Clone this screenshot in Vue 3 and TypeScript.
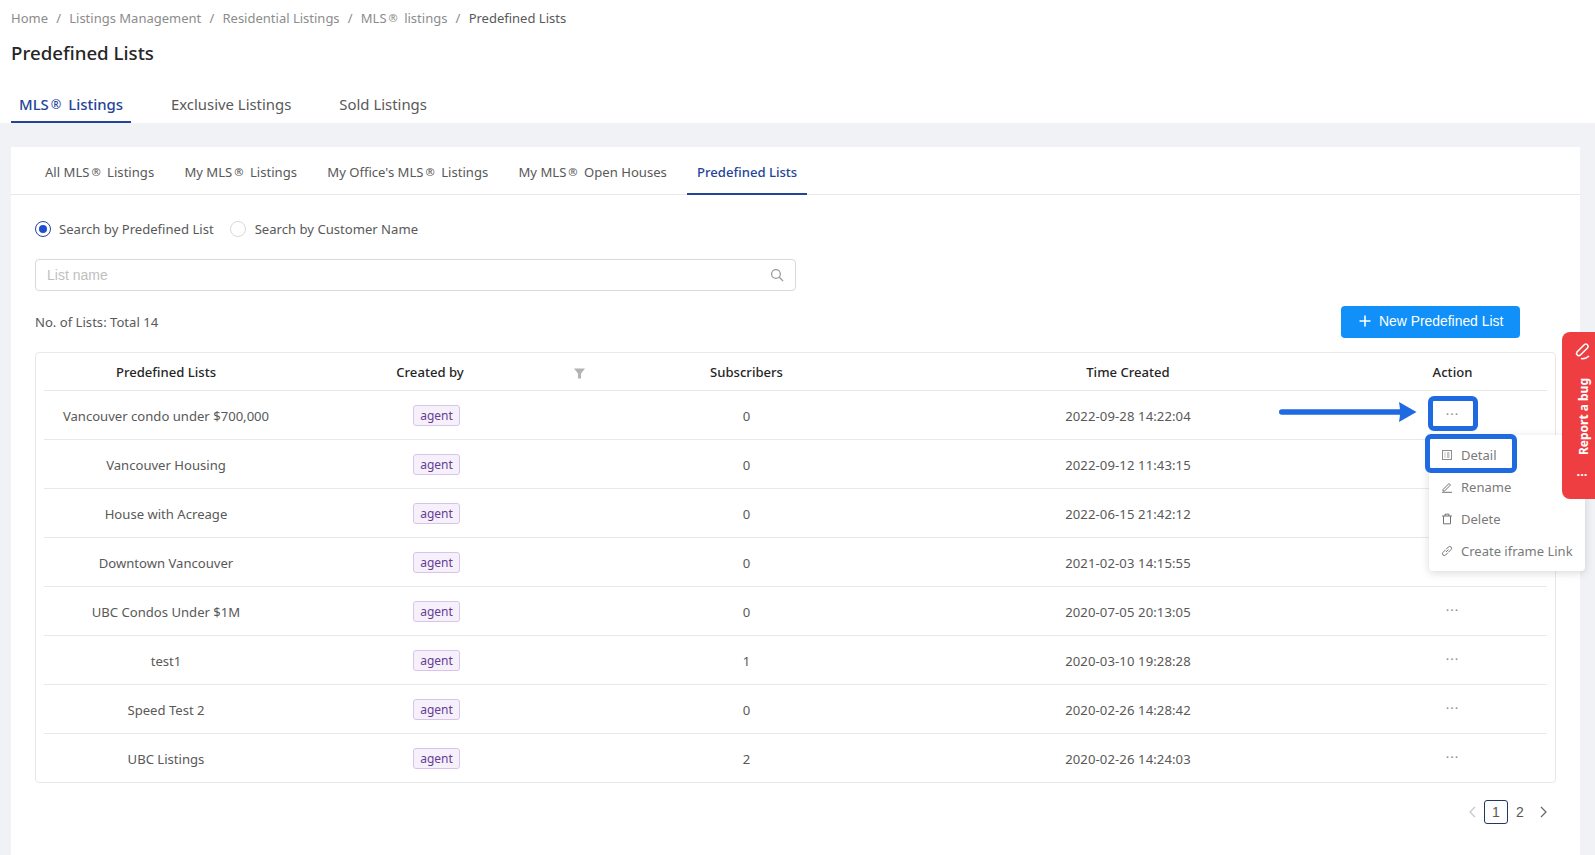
<script setup lang="ts">
interface Row { name: string; subs: number; time: string }
interface RegLabel { pre: string; post: string }
const crumbs: string[] = ['Home', 'Listings Management', 'Residential Listings']
const subTabs: RegLabel[] = [
  { pre: 'All MLS', post: ' Listings' },
  { pre: 'My MLS', post: ' Listings' },
  { pre: "My Office's MLS", post: ' Listings' },
  { pre: 'My MLS', post: ' Open Houses' }
]
const rows: Row[] = [
  { name: 'Vancouver condo under $700,000', subs: 0, time: '2022-09-28 14:22:04' },
  { name: 'Vancouver Housing', subs: 0, time: '2022-09-12 11:43:15' },
  { name: 'House with Acreage', subs: 0, time: '2022-06-15 21:42:12' },
  { name: 'Downtown Vancouver', subs: 0, time: '2021-02-03 14:15:55' },
  { name: 'UBC Condos Under $1M', subs: 0, time: '2020-07-05 20:13:05' },
  { name: 'test1', subs: 1, time: '2020-03-10 19:28:28' },
  { name: 'Speed Test 2', subs: 0, time: '2020-02-26 14:28:42' },
  { name: 'UBC Listings', subs: 2, time: '2020-02-26 14:24:03' }
]
</script>

<template>
  <div class="page">
    <header class="top">
      <nav class="crumbs">
        <template v-for="c in crumbs" :key="c">
          <span>{{ c }}</span><span class="sep">/</span>
        </template>
        <span>MLS<span class="reg">®</span> listings</span><span class="sep">/</span>
        <span class="current">Predefined Lists</span>
      </nav>
      <h1 class="title">Predefined Lists</h1>
      <div class="main-tabs">
        <span class="main-tab active">MLS<span class="reg">®</span> Listings</span>
        <span class="main-tab">Exclusive Listings</span>
        <span class="main-tab">Sold Listings</span>
      </div>
    </header>

    <section class="card">
      <div class="sub-tabs">
        <span v-for="t in subTabs" :key="t.pre + t.post" class="sub-tab">{{ t.pre }}<span class="reg">®</span>{{ t.post }}</span>
        <span class="sub-tab active">Predefined Lists</span>
      </div>

      <div class="body">
        <div class="radios">
          <span class="radio on"></span><span class="radio-label">Search by Predefined List</span>
          <span class="radio"></span><span class="radio-label">Search by Customer Name</span>
        </div>

        <div class="search">
          <span class="placeholder">List name</span>
          <svg class="search-icon" viewBox="0 0 16 16" width="14" height="14" fill="none" stroke="#9a9a9a" stroke-width="1.5">
            <circle cx="6.8" cy="6.8" r="5" />
            <path d="M10.6 10.6 15 15" />
          </svg>
        </div>

        <div class="toolbar">
          <span class="count">No. of Lists: Total 14</span>
          <button class="new-btn" type="button">
            <svg viewBox="0 0 12 12" width="12" height="12" stroke="#fff" stroke-width="1.6">
              <path d="M6 0.5v11M0.5 6h11" />
            </svg>
            New Predefined List
          </button>
        </div>

        <div class="table">
          <div class="row head">
            <div class="cell">Predefined Lists</div>
            <div class="cell created">
              <span class="created-text">Created by</span>
              <svg class="filter" viewBox="0 0 10 10" width="11" height="11" fill="#b3b3b3">
                <path d="M0 0.5h10L6.4 5v4.500H3.600V5z" />
              </svg>
            </div>
            <div class="cell">Subscribers</div>
            <div class="cell">Time Created</div>
            <div class="cell action">Action</div>
          </div>
          <div v-for="r in rows" :key="r.name" class="row">
            <div class="cell text">{{ r.name }}</div>
            <div class="cell"><span class="tag">agent</span></div>
            <div class="cell text">{{ r.subs }}</div>
            <div class="cell text time">{{ r.time }}</div>
            <div class="cell action"><span class="dots">···</span></div>
          </div>
        </div>

        <div class="pager">
          <svg class="prev" viewBox="0 0 8 12" width="8" height="12" fill="none" stroke="#c4c4c4" stroke-width="1.2"><path d="M7 1 2 6l5 5" /></svg>
          <span class="page-num current-page">1</span>
          <span class="page-num">2</span>
          <svg class="next" viewBox="0 0 8 12" width="8" height="12" fill="none" stroke="#666" stroke-width="1.2"><path d="m1 1 5 5-5 5" /></svg>
        </div>
      </div>
    </section>

    <div class="menu">
      <div class="menu-item">
        <svg viewBox="0 0 12 12" width="12" height="12" fill="none" stroke="#8c8c8c"><rect x="1.5" y="1.5" width="9" height="9" /><path d="M6 4h2.500M6 6h2.500M6 8h2.500M3.500 4h1M3.500 6h1M3.500 8h1" /></svg>
        Detail
      </div>
      <div class="menu-item">
        <svg viewBox="0 0 12 12" width="12" height="12" fill="none" stroke="#737373"><path d="M2 8.500 8 2.500l1.500 1.500-6 6H2zM1 11.300h10" /></svg>
        Rename
      </div>
      <div class="menu-item">
        <svg viewBox="0 0 12 12" width="12" height="12" fill="none" stroke="#737373"><path d="M1 3h10M4 3V1.200h4V3M2.500 3v7.800h7V3" /></svg>
        Delete
      </div>
      <div class="menu-item">
        <svg viewBox="0 0 12 12" width="12" height="12" fill="none" stroke="#737373"><path d="M5 7 7.500 4.500M4.400 5 2 7.400a1.800 1.800 0 0 0 2.600 2.600L7 7.600M5 4.400 7.400 2A1.800 1.800 0 0 1 10 4.600L7.600 7" /></svg>
        Create iframe Link
      </div>
    </div>

    <div class="mark mark-dots"></div>
    <div class="mark mark-detail"></div>
    <svg class="arrow" viewBox="0 0 140 22" width="140" height="22" fill="#1f6ae0">
      <rect x="0" y="8.300" width="126" height="5.500" rx="2.700" />
      <path d="M120 1 137.500 11 120 21q2-10 0-20z" />
    </svg>

    <aside class="bug">
      <svg class="bug-icon" viewBox="0 0 20 20" width="20" height="20" fill="none" stroke="#fff" stroke-width="1.5">
        <path d="M12.500 3.500 5 11a2.300 2.300 0 0 0 3.200 3.200L15.700 6.700A2.300 2.300 0 0 0 12.500 3.500z" />
        <path d="M9 17.500c3 .5 6-.5 8-2.500" />
      </svg>
      <span class="bug-text">Report a bug</span>
      <span class="bug-dots">···</span>
    </aside>
  </div>
</template>

<style>
html, body { margin: 0; padding: 0; overflow: hidden; background: #f0f2f6; }
</style>

<style scoped>
.page {
  position: relative;
  width: 1595px;
  height: 855px;
  overflow: hidden;
  background: #f0f2f6;
  font-family: "Noto Sans", "Open Sans", sans-serif;
  font-size: 13px;
  color: #595959;
}
.reg {
  display: inline-block;
  font-size: 0.85em;
  margin: 0 3px 0 2px;
  transform: translateY(-1px);
}
.top {
  background: #fff;
  height: 123px;
  padding: 0 11px;
  box-sizing: border-box;
}
.crumbs {
  display: flex;
  gap: 8.200px;
  padding-top: 9px;
  line-height: 19px;
  color: #8c8c8c;
}
.crumbs .sep { color: #8c8c8c; }
.crumbs .current { color: #595959; }
.title {
  margin: 11px 0 0;
  font-size: 18.700px;
  line-height: 28px;
  font-weight: 500;
  color: #262626;
}
.main-tabs {
  display: flex;
  gap: 32px;
  margin-top: 17px;
}
.main-tab {
  padding: 0 8px;
  height: 39px;
  line-height: 40px;
  font-size: 14.900px;
  color: #595959;
  box-sizing: border-box;
}
.main-tab.active {
  color: #24449a;
  font-weight: 500;
  border-bottom: 2px solid #24449a;
}
.card {
  margin: 24px 15px 0 11px;
  background: #fff;
  height: 720px;
  font-size: 13.100px;
}
.sub-tabs {
  display: flex;
  gap: 10.250px;
  height: 47px;
  padding-left: 24px;
  border-bottom: 1px solid #e8e8e8;
}
.sub-tab {
  padding: 0 10px;
  line-height: 50px;
  height: 46px;
  box-sizing: content-box;
}
.sub-tab.active {
  color: #24449a;
  font-weight: 500;
  border-bottom: 2px solid #24449a;
}
.body { padding: 0 25px 0 24px; }
.radios {
  display: flex;
  align-items: center;
  height: 20px;
  padding-top: 24px;
}
.radio {
  width: 16px;
  height: 16px;
  border: 1px solid #d9d9d9;
  border-radius: 50%;
  box-sizing: border-box;
  flex: none;
  position: relative;
}
.radio.on { border-color: #24449a; }
.radio.on::after {
  content: "";
  position: absolute;
  inset: 3px;
  border-radius: 50%;
  background: #1d4ed0;
}
.radio-label { margin: 0 16px 0 8px; }
.radio + .radio-label + .radio + .radio-label { margin-left: 9px; }
.search {
  display: flex;
  align-items: center;
  justify-content: space-between;
  width: 761px;
  height: 32px;
  margin-top: 20px;
  padding: 0 11px;
  box-sizing: border-box;
  border: 1px solid #d9d9d9;
  border-radius: 4px;
}
.placeholder {
  font-family: "Liberation Sans", Arial, sans-serif;
  font-size: 14px;
  color: #bfbfbf;
}
.toolbar {
  display: flex;
  align-items: center;
  justify-content: space-between;
  margin-top: 15px;
  padding-right: 35px;
  height: 32px;
}
.new-btn {
  display: flex;
  align-items: center;
  gap: 8px;
  height: 32px;
  width: 179px;
  padding: 0 0 2px 18px;
  box-sizing: border-box;
  border: none;
  border-radius: 4px;
  background: #1090f8;
  color: #fff;
  font-family: "Liberation Sans", Arial, sans-serif;
  font-size: 13.900px;
}
.table {
  margin-top: 14px;
  width: 1521px;
  padding: 0 8px;
  box-sizing: border-box;
  border: 1px solid #e8e8e8;
  border-radius: 4px;
}
.row {
  display: grid;
  grid-template-columns: 244px 297px 323px 440px 199px;
  height: 49px;
  align-items: center;
  text-align: center;
  border-bottom: 1px solid #e8e8e8;
  box-sizing: border-box;
}
.row:last-child { border-bottom: none; height: 48px; }
.row.head {
  height: 38px;
  color: #262626;
  font-weight: 500;
}
.created { position: relative; padding-right: 13px; }
.filter { position: absolute; right: 0; top: 5px; }
.action { padding-left: 10px; }
.text { padding-top: 1px; }
.time { letter-spacing: 0.1px; }
.tag {
  display: inline-block;
  padding: 0 6px;
  height: 21px;
  line-height: 19px;
  box-sizing: border-box;
  font-size: 12px;
  color: #663c94;
  background: #f6f0fb;
  border: 1px solid #d9c3ea;
  border-radius: 3px;
}
.dots {
  display: block;
  margin-top: -3px;
  letter-spacing: 1px;
  color: #8a8a8a;
}
.pager {
  display: flex;
  align-items: center;
  justify-content: flex-end;
  margin-top: 17px;
  width: 1513px;
  font-family: "Liberation Sans", Arial, sans-serif;
  font-size: 14px;
}
.prev { margin-right: 8px; }
.next { margin-left: 12px; }
.page-num {
  min-width: 16px;
  height: 24px;
  line-height: 24px;
  text-align: center;
  color: #595959;
}
.current-page {
  width: 24px;
  box-sizing: border-box;
  line-height: 22px;
  margin-right: 4px;
  border: 1px solid #24385f;
  border-radius: 3px;
}
.menu {
  position: absolute;
  left: 1429px;
  top: 435px;
  width: 156px;
  height: 136px;
  padding-top: 4px;
  box-sizing: border-box;
  background: #fff;
  border-radius: 4px;
  box-shadow: 0 2px 8px rgba(0, 0, 0, 0.15);
}
.menu-item {
  display: flex;
  align-items: center;
  gap: 8px;
  height: 32px;
  padding-left: 12px;
  color: #7a7a7a;
  white-space: nowrap;
}
.mark {
  position: absolute;
  box-sizing: border-box;
  border: 5px solid #1f6ae0;
  border-radius: 6px;
}
.mark-dots { left: 1428px; top: 396px; width: 50px; height: 35px; }
.mark-detail { left: 1425px; top: 434px; width: 92px; height: 39px; }
.arrow { position: absolute; left: 1279px; top: 401px; }
.bug {
  position: absolute;
  left: 1562px;
  top: 332px;
  width: 33px;
  height: 167px;
  background: #ef3e42;
  border-radius: 8px 0 0 8px;
  color: #fff;
  box-sizing: border-box;
  display: flex;
  flex-direction: column;
  align-items: center;
  padding-top: 9px;
  padding-left: 7px;
}
.bug-text {
  writing-mode: vertical-rl;
  transform: translateX(2px) rotate(180deg);
  font-size: 12px;
  font-weight: 700;
  margin-top: 17px;
  line-height: 16px;
}
.bug-dots {
  white-space: nowrap;
  font-weight: 700;
  font-size: 13px;
  margin-top: 11px;
  line-height: 16px;
}
</style>
